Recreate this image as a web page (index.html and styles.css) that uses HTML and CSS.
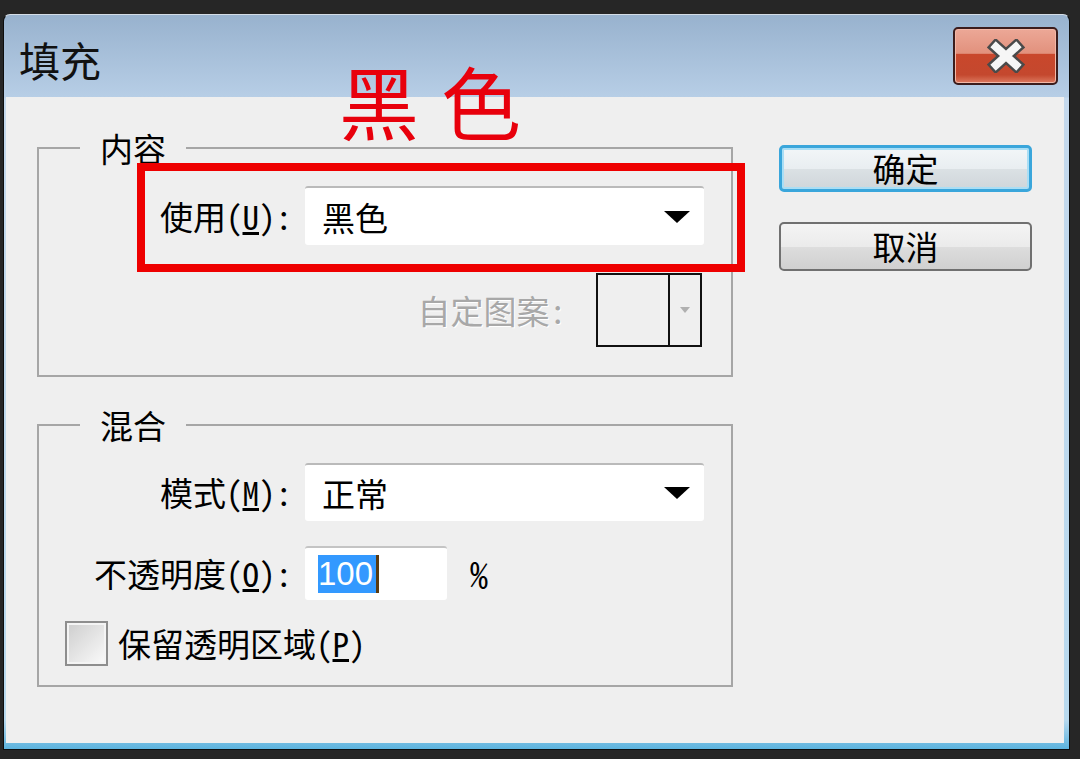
FILE: index.html
```html
<!DOCTYPE html>
<html lang="zh-CN">
<head>
    <meta charset="UTF-8">
    <title>填充</title>
    <link rel="stylesheet" href="styles.css">
</head>
<body>
    <div class="window">
        <div class="titlebar">
            <div class="title">填充</div>
            <div class="close-btn">
                <svg width="40" height="34" viewBox="0 0 40 34">
                    <path d="M10 8 L30 26 M30 8 L10 26" stroke="#4a4a4a" stroke-width="13" stroke-linecap="square"/>
                    <path d="M10 8 L30 26 M30 8 L10 26" stroke="#f6f6f6" stroke-width="8" stroke-linecap="square"/>
                </svg>
            </div>
        </div>

        <div class="client">
            <div class="groups">
                <fieldset class="group">
                    <legend>内容</legend>
                    <div class="row">
                        <label class="label">使用(<u>U</u>):</label>
                        <div class="select">
                            <span>黑色</span>
                            <span class="arrow"></span>
                        </div>
                    </div>
                    <div class="pattern-row">
                        <span class="label-disabled">自定图案:</span>
                        <div class="pattern">
                            <div class="pattern-swatch"></div>
                            <div class="pattern-drop"><span class="arrow-small"></span></div>
                        </div>
                    </div>
                </fieldset>

                <fieldset class="group group-blend">
                    <legend>混合</legend>
                    <div class="row">
                        <label class="label">模式(<u>M</u>):</label>
                        <div class="select select-mode">
                            <span>正常</span>
                            <span class="arrow"></span>
                        </div>
                    </div>
                    <div class="row row-opacity">
                        <label class="label">不透明度(<u>O</u>):</label>
                        <div class="input"><span class="selected">100</span><span class="caret"></span></div>
                        <span class="percent">%</span>
                    </div>
                    <div class="check-row">
                        <span class="checkbox"></span>
                        <span>保留透明区域(<u>P</u>)</span>
                    </div>
                </fieldset>
            </div>

            <div class="buttons">
                <button class="btn btn-default">确定</button>
                <button class="btn">取消</button>
            </div>
        </div>

        <!-- annotation drawn on top of the screenshot -->
        <div class="note">黑色</div>
        <div class="note-box"></div>
    </div>
</body>
</html>
```

FILE: styles.css
```css
* {
    box-sizing: border-box;
}

body {
    margin: 0;
    height: 759px;
    overflow: hidden;
    background: #262626;
    font-family: "Noto Sans CJK SC", "Noto Sans", sans-serif;
    font-feature-settings: "hwid";
    color: #000;
}

.window {
    position: relative;
    width: 1067px;
    height: 736px;
    margin: 14px 0 0 3px;
    display: flex;
    flex-direction: column;
    border: 1px solid #0d0d0d;
    border-top-color: #d4dde6;
    border-radius: 7px 7px 0 0;
    background: linear-gradient(180deg, #98b2ce 0, #b7cee6 82px, #c4d8ec 83px, #b8d9ee 96%, #5cb3de 100%);
}

.titlebar {
    height: 82px;
    display: flex;
    align-items: center;
    justify-content: space-between;
    padding: 0 11px 0 15px;
}

.title {
    font-size: 41px;
    line-height: 1;
    margin-top: 6px;
    color: #111;
}

.close-btn {
    width: 105px;
    height: 58px;
    border: 2px solid #3b1c1c;
    border-radius: 5px;
    background: linear-gradient(180deg, #eca897 0, #e2917d 45%, #c9472c 47%, #c4482e 85%, #dd7a60 100%);
    box-shadow: inset 0 0 0 1px #f2b8a8;
    display: flex;
    align-items: center;
    justify-content: center;
}

.client {
    flex: 1;
    margin: 0 5px 6px 2px;
    background: #efefef;
    display: flex;
    gap: 46px;
    padding: 33px 0 0 31px;
}

.groups {
    width: 696px;
}

.group {
    margin: 0;
    padding: 20px 0 28px 0;
    border: 2px solid #a6a6a6;
    min-width: 0;
}

.group legend {
    margin-left: 41px;
    padding: 0 20px;
    font-size: 33px;
    line-height: 36px;
}

.group-blend {
    margin-top: 30px;
    padding-bottom: 18px;
}

.row {
    display: flex;
    align-items: center;
    gap: 13px;
}

.label {
    width: 253px;
    text-align: right;
    font-size: 33px;
    line-height: 40px;
}

.select {
    width: 399px;
    height: 59px;
    background: #fff;
    border-top: 2px solid #bababa;
    border-radius: 3px;
    display: flex;
    align-items: center;
    justify-content: space-between;
    padding: 0 14px 0 17px;
    font-size: 33px;
}

.select-mode {
    height: 58px;
}

.arrow {
    width: 0;
    height: 0;
    border-left: 13px solid transparent;
    border-right: 13px solid transparent;
    border-top: 12px solid #000;
}

.pattern-row {
    display: flex;
    justify-content: flex-end;
    align-items: center;
    gap: 30px;
    padding-right: 29px;
    margin-top: 28px;
}

.label-disabled {
    font-size: 33px;
    color: #a8a8a8;
    text-shadow: 1px 1px 0 #fff;
}

.pattern {
    width: 106px;
    height: 74px;
    border: 2px solid #111;
    display: flex;
}

.pattern-swatch {
    width: 72px;
    border-right: 2px solid #111;
}

.pattern-drop {
    flex: 1;
    display: flex;
    align-items: center;
    justify-content: center;
}

.arrow-small {
    width: 0;
    height: 0;
    border-left: 5px solid transparent;
    border-right: 5px solid transparent;
    border-top: 6px solid #b0b0b0;
}

.row-opacity {
    margin-top: 25px;
}

.input {
    width: 142px;
    height: 54px;
    background: #fff;
    border-top: 2px solid #c4c4c4;
    border-radius: 3px;
    padding-left: 13px;
    display: flex;
    align-items: center;
}

.selected {
    background: #3399ff;
    color: #fff;
    font-family: "Liberation Sans", sans-serif;
    font-size: 33px;
    line-height: 38px;
    padding-right: 3px;
}

.caret {
    width: 3px;
    height: 38px;
    background: #5a3a10;
}

.percent {
    margin-left: 10px;
    font-size: 36px;
}

.check-row {
    display: flex;
    align-items: center;
    gap: 10px;
    margin-top: 19px;
    padding-left: 26px;
    font-size: 33px;
}

.checkbox {
    width: 43px;
    height: 45px;
    border: 2px solid #8e8e8e;
    background: linear-gradient(135deg, #cdcdcd, #fbfbfb);
    box-shadow: inset 0 0 0 2px #f4f4f4;
}

.buttons {
    width: 253px;
    display: flex;
    flex-direction: column;
    gap: 30px;
    margin-top: 15px;
}

.btn {
    height: 49px;
    border: 2px solid #707070;
    border-radius: 5px;
    background: linear-gradient(#f4f4f4 0, #ebebeb 50%, #dddddd 51%, #d0d0d0 100%);
    font-family: inherit;
    font-size: 33px;
    line-height: 1;
    display: flex;
    align-items: center;
    justify-content: center;
    padding: 0;
    color: #000;
}

.btn-default {
    height: 47px;
    border: 3px solid #3aa6db;
    box-shadow: inset 0 0 0 2px #a9def5;
    background: linear-gradient(#f2f6f8 0, #e9eef1 50%, #dbe1e4 51%, #cfd6da 100%);
}

.note {
    position: absolute;
    left: 335px;
    top: 44px;
    font-size: 80px;
    line-height: 1;
    letter-spacing: 22px;
    color: #e8000c;
}

.note-box {
    position: absolute;
    left: 133px;
    top: 148px;
    width: 608px;
    height: 109px;
    border: 8px solid #ee0000;
}
```
